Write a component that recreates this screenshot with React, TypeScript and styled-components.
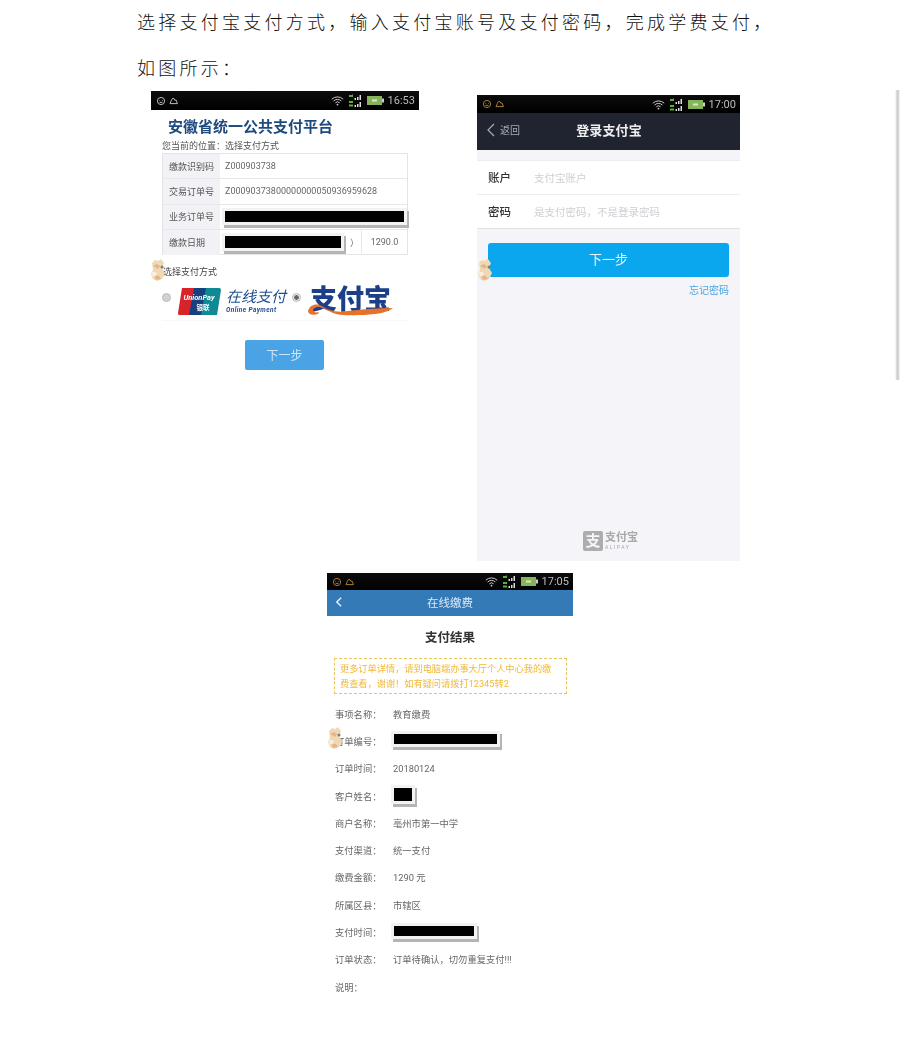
import React from "react";
import styled, { createGlobalStyle } from "styled-components";

const Global = createGlobalStyle`
  html, body { margin: 0; padding: 0; background: #fff; }
  body { width: 900px; height: 1051px; overflow: hidden; font-family: Roboto, "Noto Sans CJK SC", sans-serif; }
`;

const Page = styled.div`
  position: relative;
  width: 900px;
  height: 1051px;
  padding-top: 1px;
  box-sizing: border-box;
  background: #fff;
  overflow: hidden;
`;
const EdgeShadow = styled.div`
  position: absolute;
  right: 0;
  top: 90px;
  width: 5px;
  height: 290px;
  background: linear-gradient(90deg, #fff 0%, #ccc 45%, #d8d8d8 75%, #fff 100%);
  filter: blur(0.6px);
`;
const DocText = styled.div`
  margin: -3px 0 0 137px;
`;
const Doc = styled.p`
  margin: 0;
  font: 300 18px/46px "Noto Sans CJK SC", sans-serif;
  letter-spacing: 3.25px;
  color: #111;
  white-space: nowrap;
`;
const TopRow = styled.div`
  display: flex;
  align-items: flex-start;
  gap: 58px;
  padding-left: 151px;
  margin-top: 1px;
`;
const Shot = styled.div<{ $w: number; $h: number; $bg?: string }>`
  position: relative;
  width: ${(p) => p.$w}px;
  height: ${(p) => p.$h}px;
  background: ${(p) => p.$bg || "#fff"};
  flex: none;
  filter: blur(0.45px);
`;
const ShotTwo = styled(Shot)`
  margin-top: 4px;
`;
const ShotThree = styled(Shot)`
  margin: 12px 0 0 327px;
`;
const Status = styled.div<{ $h: number }>`
  height: ${(p) => p.$h}px;
  background: linear-gradient(#0c0c0c, #000);
  display: flex;
  align-items: center;
  padding: 0 4px 0 5px;
  color: #bbb;
  font-size: 11px;
`;
const StatusLeft = styled.div`
  flex: 1;
  display: flex;
  align-items: center;
`;
const StatusRight = styled.div`
  display: flex;
  align-items: center;
  gap: 4px;
`;

const LeftIcons = ({ c }: { c: string }) => (
  <svg width="24" height="10" viewBox="0 0 24 10" fill="none" stroke={c} strokeWidth="1">
    <circle cx="5" cy="5" r="3.6" />
    <path d="M3.5 4.5h.6M6 4.5h.6M3.6 6.4h2.8" />
    <path d="M14 7.6h7.4l-1.2-3.4h-1.4l-.8-1.6h-1.6l-1 1.8z" />
  </svg>
);
const Wifi = () => (
  <svg width="13" height="11" viewBox="0 0 13 11" fill="none" stroke="#ccc" strokeWidth="1">
    <path d="M.8 4.2a8.2 8.2 0 0 1 11.4 0M2.6 6a5.6 5.6 0 0 1 7.8 0M4.4 7.8a3 3 0 0 1 4.2 0" />
    <circle cx="6.5" cy="9.6" r=".9" fill="#ccc" stroke="none" />
  </svg>
);
const Signal = () => (
  <svg width="15" height="13" viewBox="0 0 15 13">
    <path d="M1 1h3l1-1v3H1zM1 7h4v2H1zM1 10.500h4v2H1z" fill="#5fae3a" />
    <path d="M6.500 4h1.500v2H6.500zM9 3h1.500v3H9zM11.500 1h1.500v5h-1.500zM6.500 11h1.500v2H6.500zM9 10h1.500v3H9zM11.500 8h1.500v5h-1.500z" fill="#ddd" />
  </svg>
);
const Battery = () => (
  <svg width="17" height="9" viewBox="0 0 17 9">
    <rect x="0" y="0" width="15" height="9" fill="#86b45a" />
    <rect x="15" y="2.500" width="2" height="4" fill="#ccc" />
    <rect x="5" y="3.500" width="5" height="2" fill="#d8e8c8" />
  </svg>
);
const StatusBar = ({ h, time, c = "#bbb" }: { h: number; time: string; c?: string }) => (
  <Status $h={h}>
    <StatusLeft>
      <LeftIcons c={c} />
    </StatusLeft>
    <StatusRight>
      <Wifi />
      <Signal />
      <Battery />
      <span>{time}</span>
    </StatusRight>
  </Status>
);

const Redact = styled.span<{ $w: number; $h: number }>`
  display: block;
  width: ${(p) => p.$w}px;
  height: ${(p) => p.$h}px;
  background: #000;
  box-shadow: 0 0 0 3px #f2f2f2, 2px 3px 0 3px #b4b4b4;
`;

const OneBody = styled.div`
  padding: 7px 11px 0;
`;
const PlatformTitle = styled.h1`
  margin: 0 0 3px 6px;
  font-size: 15px;
  line-height: 20px;
  font-weight: 700;
  color: #1f4a80;
  white-space: nowrap;
`;
const Crumb = styled.div`
  font-size: 9px;
  line-height: 13px;
  color: #555;
  white-space: nowrap;
`;
const Table = styled.div`
  width: 246px;
  box-sizing: border-box;
  height: 102px;
  border: 1px solid #e4e4e8;
`;
const TableRow = styled.div`
  display: flex;
  height: 24.500px;
  & + & { border-top: 1px solid #e8e8ec; }
  box-sizing: content-box;
  align-items: stretch;
  &:first-child { height: 24px; }
`;
const TableLabel = styled.div`
  width: 57px;
  flex: none;
  background: #f2f2f6;
  display: flex;
  align-items: center;
  padding-left: 6px;
  box-sizing: border-box;
  font-size: 9px;
  color: #555;
  white-space: nowrap;
`;
const TableValue = styled.div`
  flex: 1;
  display: flex;
  align-items: center;
  padding-left: 5px;
  font-size: 9px;
  color: #666;
  white-space: nowrap;
`;
const Paren = styled.span`
  margin-left: 9px;
`;
const Amount = styled.div`
  width: 45px;
  flex: none;
  border-left: 1px solid #e8e8ec;
  display: flex;
  align-items: center;
  justify-content: center;
  font-size: 9px;
  color: #666;
`;
const ChooseLabel = styled.div`
  margin: 10px 0 0 1px;
  font-size: 9px;
  line-height: 14px;
  color: #444;
`;
const PayOptions = styled.div`
  display: flex;
  align-items: center;
  margin-top: 3px;
  height: 38px;
  border-bottom: 1px solid #f8f8f8;
`;
const Radio = styled.span<{ $on?: boolean }>`
  width: 9px;
  height: 9px;
  border-radius: 50%;
  flex: none;
  margin-bottom: 7px;
  background: ${(p) => (p.$on ? "radial-gradient(#666 0 2px, #e4e4e4 2.500px)" : "#d2d2d2")};
  border: 1px solid #bbb;
  box-sizing: border-box;
`;
const OnlinePay = styled.div`
  margin-left: 5px;
  width: 66px;
  color: #1e4d8c;
`;
const OnlineZh = styled.div`
  font-size: 15px;
  line-height: 17px;
  font-style: italic;
  white-space: nowrap;
`;
const OnlineEn = styled.div`
  font-size: 6.500px;
  line-height: 8px;
  font-weight: 700;
  font-style: italic;
  letter-spacing: 0.4px;
  white-space: nowrap;
`;
const PrimaryOne = styled.button`
  display: block;
  width: 79px;
  height: 30px;
  margin: 19px 0 0 83px;
  padding: 0 0 2px;
  border: 0;
  border-radius: 2px;
  background: #4aa3e4;
  color: #cfe6f7;
  font: 12px "Noto Sans CJK SC", sans-serif;
`;

const UnionPay = () => (
  <svg width="43" height="27" viewBox="0 0 43 27" style={{ marginLeft: 7, flex: "none" }}>
    <path d="M4 0h14l-5 27H1q-1 0-1-2z" fill="#d8232a" />
    <path d="M16 0h14l-5 27H11z" fill="#17407e" />
    <path d="M28 0h13q2 0 2 2l-4 25H23z" fill="#0f8a94" />
    <text x="21" y="12" fill="#fff" fontSize="7.500" fontWeight="700" fontStyle="italic" textAnchor="middle" fontFamily="Roboto">UnionPay</text>
    <text x="25" y="22" fill="#fff" fontSize="6.500" fontWeight="700" textAnchor="middle" fontFamily="Noto Sans CJK SC">银联</text>
  </svg>
);
const AlipayLogo = () => (
  <svg width="88" height="40" viewBox="0 0 88 40" style={{ margin: "0 0 8px 6px", flex: "none" }}>
    <text x="3" y="32" fill="#1b3f88" fontSize="27" fontWeight="900" fontFamily="Noto Sans CJK SC">支付宝</text>
    <path transform="translate(0 9)" d="M1 25c2-7 9-8 14-5 6 4 14 7 26 5 16-2 30-3 45-3-6 5-20 7-34 7-14 1-24 0-32-5-5-3-12-5-14 0 0 2 3 3 6 2l-1 2c-5 2-10 0-10-3z" fill="#e8712a" />
  </svg>
);
const StickerBox = styled.div<{ $x: number; $y: number }>`
  position: absolute;
  left: ${(p) => p.$x}px;
  top: ${(p) => p.$y}px;
  pointer-events: none;
`;
const Sticker = ({ x, y }: { x: number; y: number }) => (
  <StickerBox $x={x} $y={y}>
    <svg width="18" height="25" viewBox="0 0 18 25">
      <path d="M2 5l3-3 3 1 3-2 3 4-2 5 3 5-3 6-5 2-4-2-2-5 2-4z" fill="#f0d8b4" />
      <path d="M3 8l4-2 3 2-2 3zM4 17l5 1 2 3-5 1z" fill="#e2b78c" />
      <circle cx="12" cy="9" r="1.500" fill="#77807f" />
      <path d="M1 14h5l1 3-4 2z" fill="#fbeedd" />
    </svg>
  </StickerBox>
);

const NavDark = styled.div`
  height: 37px;
  background: #1f2430;
  display: grid;
  grid-template-columns: 1fr auto 1fr;
  align-items: center;
  padding: 0 0 4px 10px;
  box-sizing: border-box;
  color: #eee;
`;
const BackLink = styled.div`
  display: flex;
  align-items: center;
  gap: 5px;
  font-size: 10px;
  color: #a8acb2;
`;
const NavTitle = styled.div`
  font-size: 13px;
  font-weight: 700;
  margin-left: -9px;
  letter-spacing: 0.1px;
`;
const Gap = styled.div`
  height: 10px;
`;
const FormGroup = styled.div`
  background: #fff;
  border-bottom: 1px solid #e2e2e6;
`;
const FormRow = styled.div`
  height: 34px;
  box-sizing: border-box;
  display: flex;
  align-items: center;
  padding: 0 0 1px 11px;
  border-top: 1px solid #ececf0;
`;
const FormLabel = styled.span`
  width: 46px;
  font-size: 11.500px;
  font-weight: 500;
  color: #333;
`;
const FormHint = styled.span`
  font-size: 10.500px;
  color: #cfcfd4;
`;
const PrimaryTwo = styled.button`
  display: block;
  width: 241px;
  height: 34px;
  margin: 14px 0 0 11px;
  padding: 0 0 3px;
  border: 0;
  border-radius: 3px;
  background: #0aa7ee;
  color: #e9f7fe;
  font: 13px "Noto Sans CJK SC", sans-serif;
`;
const Forgot = styled.div`
  margin: 7px 11px 0 0;
  text-align: right;
  font-size: 10px;
  line-height: 14px;
  color: #4aa3e0;
`;
const Footer = styled.div`
  position: absolute;
  left: 106px;
  bottom: 10px;
  display: flex;
  align-items: center;
  gap: 2px;
  color: #a8a8a8;
`;
const FooterBadge = styled.div`
  width: 20px;
  height: 20px;
  border-radius: 2px;
  background: #adadad;
  color: #f4f4f9;
  font-size: 15px;
  line-height: 20px;
  text-align: center;
  font-weight: 700;
`;
const FooterText = styled.div`
  font-size: 11px;
  line-height: 12px;
  font-weight: 700;
`;
const FooterEn = styled.div`
  font-size: 5px;
  line-height: 6px;
  letter-spacing: 1.500px;
  font-weight: 400;
`;

const NavBlue = styled.div`
  height: 26px;
  background: #337ab7;
  display: grid;
  grid-template-columns: 1fr auto 1fr;
  align-items: center;
  padding: 0 0 3px 9px;
  box-sizing: border-box;
  color: #dfe9f3;
`;
const NavBlueTitle = styled.div`
  font-size: 11.500px;
  margin-left: -9px;
`;
const ResultTitle = styled.h2`
  margin: 14px 0 12px;
  text-align: center;
  font-size: 12.500px;
  line-height: 16px;
  font-weight: 700;
  color: #333;
`;
const Notice = styled.div`
  margin: 0 6px 0 7px;
  padding: 2px 5px;
  height: 36px;
  box-sizing: border-box;
  border: 1px dashed #e8c65e;
  font-size: 9.200px;
  line-height: 15px;
  color: #f0b93a;
  white-space: nowrap;
`;
const InfoList = styled.div`
  margin-top: 6px;
  padding-left: 8px;
`;
const InfoRow = styled.div`
  display: flex;
  align-items: center;
  height: 27.300px;
  font-size: 9.300px;
  color: #666;
  white-space: nowrap;
`;
const InfoLabel = styled.span`
  width: 58px;
  flex: none;
`;
const InfoRedact = styled.span`
  margin: -3px 0 0 1px;
`;

const Chevron = ({ w = 8, h = 14, sw = 1.2, c = "#a8acb2" }: { w?: number; h?: number; sw?: number; c?: string }) => (
  <svg width={w} height={h} viewBox="0 0 8 14" fill="none" stroke={c} strokeWidth={sw}>
    <path d="M7 1L1 7l6 6" />
  </svg>
);

const info: [string, React.ReactNode][] = [
  ["事项名称：", "教育缴费"],
  ["订单编号：", <InfoRedact><Redact $w={103} $h={10} /></InfoRedact>],
  ["订单时间：", "20180124"],
  ["客户姓名：", <InfoRedact><Redact $w={18} $h={13} /></InfoRedact>],
  ["商户名称：", "亳州市第一中学"],
  ["支付渠道：", "统一支付"],
  ["缴费金额：", "1290 元"],
  ["所属区县：", "市辖区"],
  ["支付时间：", <InfoRedact><Redact $w={80} $h={10} /></InfoRedact>],
  ["订单状态：", "订单待确认，切勿重复支付!!!"],
  ["说明：", ""],
];

export default function App() {
  return (
    <Page>
      <Global />
      <DocText>
        <Doc>选择支付宝支付方式，输入支付宝账号及支付密码，完成学费支付，</Doc>
        <Doc>如图所示：</Doc>
      </DocText>
      <TopRow>
        <Shot $w={268} $h={287}>
          <StatusBar h={19} time="16:53" />
          <OneBody>
            <PlatformTitle>安徽省统一公共支付平台</PlatformTitle>
            <Crumb>您当前的位置：选择支付方式</Crumb>
            <Table>
              <TableRow>
                <TableLabel>缴款识别码</TableLabel>
                <TableValue>Z000903738</TableValue>
              </TableRow>
              <TableRow>
                <TableLabel>交易订单号</TableLabel>
                <TableValue>Z00090373800000000050936959628</TableValue>
              </TableRow>
              <TableRow>
                <TableLabel>业务订单号</TableLabel>
                <TableValue><Redact $w={179} $h={11} /></TableValue>
              </TableRow>
              <TableRow>
                <TableLabel>缴款日期</TableLabel>
                <TableValue>
                  <Redact $w={116} $h={12} />
                  <Paren>）</Paren>
                </TableValue>
                <Amount>1290.0</Amount>
              </TableRow>
            </Table>
            <ChooseLabel>选择支付方式</ChooseLabel>
            <PayOptions>
              <Radio />
              <UnionPay />
              <OnlinePay>
                <OnlineZh>在线支付</OnlineZh>
                <OnlineEn>Online Payment</OnlineEn>
              </OnlinePay>
              <Radio $on />
              <AlipayLogo />
            </PayOptions>
            <PrimaryOne>下一步</PrimaryOne>
          </OneBody>
          <Sticker x={-1} y={167} />
        </Shot>
        <ShotTwo $w={263} $h={466} $bg="#f4f4f9">
          <StatusBar h={18} time="17:00" c="#a67a3a" />
          <NavDark>
            <BackLink><Chevron />返回</BackLink>
            <NavTitle>登录支付宝</NavTitle>
          </NavDark>
          <Gap />
          <FormGroup>
            <FormRow>
              <FormLabel>账户</FormLabel>
              <FormHint>支付宝账户</FormHint>
            </FormRow>
            <FormRow>
              <FormLabel>密码</FormLabel>
              <FormHint>是支付密码，不是登录密码</FormHint>
            </FormRow>
          </FormGroup>
          <PrimaryTwo>下一步</PrimaryTwo>
          <Forgot>忘记密码</Forgot>
          <Footer>
            <FooterBadge>支</FooterBadge>
            <FooterText>
              支付宝
              <FooterEn>ALIPAY</FooterEn>
            </FooterText>
          </Footer>
          <Sticker x={0} y={163} />
        </ShotTwo>
      </TopRow>
      <ShotThree $w={246} $h={425}>
        <StatusBar h={17} time="17:05" c="#a67a3a" />
        <NavBlue>
          <Chevron w={6} h={10} sw={2} c="#e6eef6" />
          <NavBlueTitle>在线缴费</NavBlueTitle>
        </NavBlue>
        <ResultTitle>支付结果</ResultTitle>
        <Notice>
          更多订单详情，请到电脑端办事大厅个人中心我的缴
          <br />
          费查看，谢谢！如有疑问请拨打12345转2
        </Notice>
        <InfoList>
          {info.map(([k, v]) => (
            <InfoRow key={k}>
              <InfoLabel>{k}</InfoLabel>
              {v}
            </InfoRow>
          ))}
        </InfoList>
        <Sticker x={0} y={153} />
      </ShotThree>
      <EdgeShadow />
    </Page>
  );
}
